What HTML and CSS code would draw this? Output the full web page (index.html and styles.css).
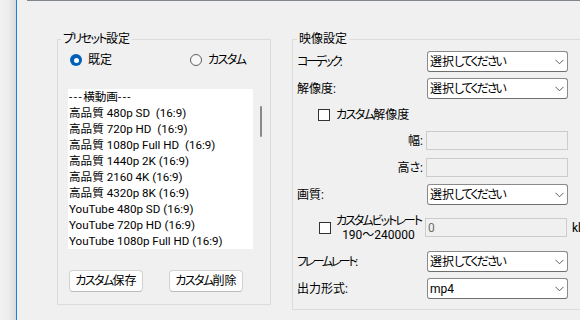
FILE: index.html
```html
<!DOCTYPE html>
<html lang="ja">
<head>
<meta charset="utf-8">
<link rel="stylesheet" href="styles.css">
</head>
<body>
<div class="window">
  <div class="shade"></div>
  <div class="edge"></div>
  <div class="main">
    <div class="topline"></div>
    <div class="panels">
      <fieldset class="group preset">
        <legend><span class="kn">プリセット</span>設定</legend>
        <div class="radios">
          <label class="radio first"><span class="dot on"></span>既定</label>
          <label class="radio second"><span class="dot"></span><span class="kn">カスタム</span></label>
        </div>
        <div class="listbox">
          <ul class="items">
            <li><span class="dash">---</span>横動画<span class="dash">---</span></li>
            <li>高品質 480p SD&nbsp; (16:9)</li>
            <li>高品質 720p HD&nbsp; (16:9)</li>
            <li>高品質 1080p Full HD&nbsp; (16:9)</li>
            <li>高品質 1440p 2K (16:9)</li>
            <li>高品質 2160 4K (16:9)</li>
            <li>高品質 4320p 8K (16:9)</li>
            <li>YouTube 480p SD (16:9)</li>
            <li>YouTube 720p HD (16:9)</li>
            <li>YouTube 1080p Full HD (16:9)</li>
          </ul>
          <div class="scroll"><div class="thumb"></div></div>
        </div>
        <div class="buttons">
          <button class="btn"><span class="kn">カスタム</span>保存</button>
          <button class="btn"><span class="kn">カスタム</span>削除</button>
        </div>
      </fieldset>
      <fieldset class="group video">
        <legend>映像設定</legend>
        <div class="row r1">
          <span class="label"><span class="kn k3">コーデック</span>:</span>
          <div class="select"><span>選択<span class="kn k2">してください</span></span><svg class="chev" width="9" height="6" viewBox="0 0 9 6"><path d="M0.5 0.8 L4.5 4.8 L8.5 0.8" fill="none" stroke="#5c5c5c" stroke-width="1"/></svg></div>
        </div>
        <div class="row r2">
          <span class="label">解像度:</span>
          <div class="select"><span>選択<span class="kn k2">してください</span></span><svg class="chev" width="9" height="6" viewBox="0 0 9 6"><path d="M0.5 0.8 L4.5 4.8 L8.5 0.8" fill="none" stroke="#5c5c5c" stroke-width="1"/></svg></div>
        </div>
        <div class="row r3">
          <span class="check"></span><span class="checktext"><span class="kn">カスタム</span>解像度</span>
        </div>
        <div class="row r4">
          <span class="label right">幅:</span>
          <div class="input"></div>
        </div>
        <div class="row r5">
          <span class="label right">高さ:</span>
          <div class="input"></div>
        </div>
        <div class="row r6">
          <span class="label">画質:</span>
          <div class="select"><span>選択<span class="kn k2">してください</span></span><svg class="chev" width="9" height="6" viewBox="0 0 9 6"><path d="M0.5 0.8 L4.5 4.8 L8.5 0.8" fill="none" stroke="#5c5c5c" stroke-width="1"/></svg></div>
        </div>
        <div class="row r7">
          <div class="bitlabel">
            <span class="check"></span>
            <span class="twoline"><span class="kn k2">カスタムビットレート</span><span>190〜240000</span></span>
          </div>
          <div class="input"><span class="val">0</span></div>
          <span class="unit">kbps</span>
        </div>
        <div class="row r8">
          <span class="label"><span class="kn k3">フレームレート</span>:</span>
          <div class="select"><span>選択<span class="kn k2">してください</span></span><svg class="chev" width="9" height="6" viewBox="0 0 9 6"><path d="M0.5 0.8 L4.5 4.8 L8.5 0.8" fill="none" stroke="#5c5c5c" stroke-width="1"/></svg></div>
        </div>
        <div class="row r9">
          <span class="label">出力形式:</span>
          <div class="select"><span>mp4</span><svg class="chev" width="9" height="6" viewBox="0 0 9 6"><path d="M0.5 0.8 L4.5 4.8 L8.5 0.8" fill="none" stroke="#5c5c5c" stroke-width="1"/></svg></div>
        </div>
      </fieldset>
    </div>
  </div>
</div>
</body>
</html>
```
FILE: styles.css
```css
* { box-sizing: border-box; }
html, body {
  margin: 0;
  padding: 0;
  width: 580px;
  height: 320px;
  overflow: hidden;
  background: #f0f0f0;
}
body {
  font-family: Roboto, "Noto Sans CJK JP", sans-serif;
  font-size: 12px;
  font-feature-settings: "palt";
  color: #000;
}
.kn { letter-spacing: -1.6px; }
.kn.k2 { letter-spacing: -2px; }
.kn.k3 { letter-spacing: -2.4px; }
.window {
  display: flex;
  width: 580px;
  height: 320px;
}
.shade {
  width: 16px;
  flex-shrink: 0;
  background: linear-gradient(to right, #f2f2f2 0%, #ececec 55%, #dadada 100%);
}
.edge {
  width: 1px;
  flex-shrink: 0;
  background: #1a7fd6;
}
.main {
  flex: 1;
  min-width: 0;
  overflow: hidden;
}
.topline {
  height: 1px;
  margin-left: 10px;
  background: #80868c;
}
.panels {
  display: flex;
  align-items: flex-start;
  margin-top: 30px;
  padding-left: 40px;
}
.group {
  margin: 0;
  padding: 0;
  min-width: 0;
  border: 1px solid #dcdcdc;
  flex-shrink: 0;
}
.group legend {
  padding: 0 2px;
  line-height: 16px;
  height: 16px;
}
.preset {
  width: 214px;
  padding-bottom: 12px;
}
.preset legend { margin-left: 3px; }
.radios {
  display: flex;
  height: 16px;
  margin-top: 5px;
  align-items: center;
}
.radio {
  display: flex;
  align-items: center;
  line-height: 16px;
}
.radio.first { margin-left: 12px; }
.radio.second { margin-left: 78px; }
.dot {
  width: 12px;
  height: 12px;
  border-radius: 50%;
  border: 1px solid #5d5d5d;
  background: #f7f7f7;
  margin-right: 6px;
  position: relative;
}
.dot.on {
  border: none;
  background: #005fb8;
}
.dot.on::after {
  content: "";
  position: absolute;
  left: 3.5px;
  top: 3.5px;
  width: 5px;
  height: 5px;
  border-radius: 50%;
  background: #fff;
}
.listbox {
  display: flex;
  margin-top: 21px;
  margin-left: 10px;
}
.items {
  list-style: none;
  margin: 0;
  padding: 0 0 0 1px;
  width: 185px;
  height: 160px;
  background: #fff;
  overflow: hidden;
  font-size: 11.6px;
}
.items li {
  line-height: 16px;
  height: 16px;
  white-space: nowrap;
}
.dash { letter-spacing: 1.5px; }
.scroll {
  width: 12px;
  padding-top: 17px;
  padding-left: 7px;
}
.thumb {
  width: 2px;
  height: 31px;
  background: #8a8a8a;
  border-radius: 1px;
}
.buttons {
  display: flex;
  gap: 26px;
  margin-top: 21px;
  margin-left: 11px;
}
.btn {
  width: 74px;
  height: 22px;
  padding: 0;
  font: inherit;
  font-feature-settings: "palt";
  color: #000;
  background: #fdfdfd;
  border: 1px solid #d2d2d2;
  border-bottom-color: #bcbcbc;
  border-radius: 4px;
  line-height: 20px;
}
.video {
  width: 320px;
  margin-left: 21px;
  padding-left: 4px;
  padding-bottom: 10px;
}
.video legend { margin-left: 0; }
.row {
  display: flex;
  align-items: center;
  height: 21px;
}
.r1 { margin-top: 4px; }
.r2 { margin-top: 6px; }
.r3 { height: 31px; padding-left: 21px; }
.r4 { margin-top: 1px; height: 19px; }
.r5 { margin-top: 8px; height: 19px; }
.r6 { margin-top: 7px; }
.r7 { margin-top: 12px; }
.r8 { margin-top: 13px; }
.r9 { margin-top: 6px; }
.label {
  width: 130px;
  flex-shrink: 0;
  line-height: 16px;
}
.label.right {
  text-align: right;
  padding-right: 4px;
}
.select {
  width: 141px;
  height: 21px;
  flex-shrink: 0;
  background: #fff;
  border: 1px solid #8a8a8a;
  border-bottom-color: #6e6e6e;
  border-radius: 3px;
  display: flex;
  align-items: center;
  justify-content: space-between;
  padding: 0 3px 0 2px;
  line-height: 16px;
}
.chev { margin-top: 1px; }
.input {
  width: 142px;
  height: 19px;
  flex-shrink: 0;
  margin-left: -1px;
  border: 1px solid #cccccc;
  background: #f0f0f0;
  display: flex;
  align-items: center;
  padding-left: 2px;
}
.val { color: #6d6d6d; line-height: 16px; }
.check {
  width: 12px;
  height: 12px;
  flex-shrink: 0;
  border: 1px solid #333;
  background: #fff;
  margin-right: 6px;
}
.checktext { line-height: 16px; }
.bitlabel {
  width: 129px;
  flex-shrink: 0;
  display: flex;
  align-items: center;
  padding-left: 22px;
}
.bitlabel .check { margin-right: 5px; }
.twoline {
  display: flex;
  flex-direction: column;
  align-items: center;
  line-height: 14px;
  white-space: nowrap;
}
.unit {
  margin-left: 5px;
  line-height: 16px;
}
```
